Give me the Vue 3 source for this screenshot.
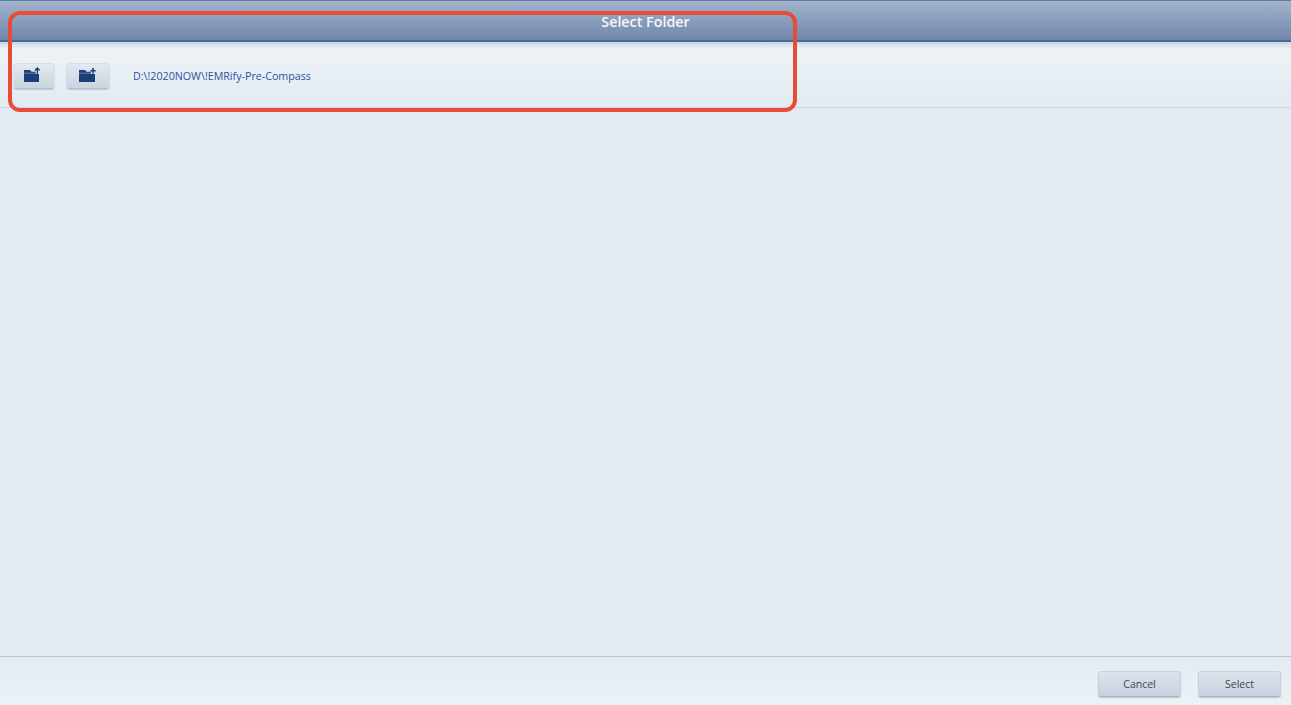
<script setup>
const path = 'D:\\!2020NOW\\!EMRify-Pre-Compass'
</script>

<template>
  <div class="dialog">
    <header class="title-bar">
      <h1 class="title">Select Folder</h1>
    </header>
    <section class="toolbar">
      <button class="icon-btn first" aria-label="Parent folder">
        <svg width="18" height="15" viewBox="0 0 18 15">
          <path d="M1 3h6l1.6 1.8h3.9V7H16v8H1z" fill="#1c3f78" />
          <path d="M1 6.2h11" stroke="#8ea3c0" stroke-width=".7" />
          <path d="M14.3 6.8V1.6M12 3.4l2.3-2.4 2.3 2.4" fill="none" stroke="#1c3f78" stroke-width="1.4" />
        </svg>
      </button>
      <button class="icon-btn second" aria-label="New folder">
        <svg width="18" height="15" viewBox="0 0 18 15">
          <path d="M1 3h6l1.6 1.8h4.2V7H17v8H1z" fill="#1c3f78" />
          <path d="M1 6.2h12" stroke="#8ea3c0" stroke-width=".7" />
          <path d="M15 1v5.4M12.3 3.7h5.4" fill="none" stroke="#1c3f78" stroke-width="1.6" />
        </svg>
      </button>
      <span class="path">{{ path }}</span>
    </section>
    <main class="content"></main>
    <footer class="footer">
      <button class="action">Cancel</button>
      <button class="action">Select</button>
    </footer>
    <div class="callout"></div>
  </div>
</template>

<style scoped>
.dialog {
  position: relative;
  display: flex;
  flex-direction: column;
  width: 1291px;
  height: 705px;
  overflow: hidden;
  background: #e3ebf2;
  font-family: "Open Sans", "Noto Sans", sans-serif;
}
.title-bar {
  flex: 0 0 42px;
  box-sizing: border-box;
  border-top: 1px solid #5f7fa8;
  border-bottom: 2px solid #48699a;
  background: linear-gradient(#a3b4cc, #7087aa);
  text-align: center;
}
.title {
  margin: 0;
  font-size: 14.3px;
  font-weight: 600;
  line-height: 39px;
  height: 39px;
  color: #f4f7fb;
  padding-top: 1px;
  box-sizing: border-box;
}
.toolbar {
  flex: 0 0 66px;
  box-sizing: border-box;
  display: flex;
  align-items: center;
  padding: 3px 0 0 13px;
  border-bottom: 1px solid #cfd8e0;
  background: linear-gradient(#cdd7e0 0, #edf3f7 7px, #e2ebf1 100%);
}
.icon-btn {
  display: flex;
  align-items: center;
  justify-content: center;
  box-sizing: border-box;
  width: 42px;
  height: 26px;
  padding: 0;
  border: 1px solid #d6dfe8;
  border-bottom-color: #b3bfcc;
  border-radius: 4px;
  background: linear-gradient(#e2e9f0, #c9d5e0);
  box-shadow: 0 1px 1px #bcc8d4;
}
.icon-btn svg {
  margin-bottom: 3px;
}
.icon-btn.first svg {
  margin-right: 4px;
}
.icon-btn.second {
  width: 44px;
  margin-left: 11px;
}
.icon-btn.second svg {
  margin-right: 2px;
}
.path {
  margin-left: 23px;
  font-size: 10.7px;
  color: #2b50a0;
}
.content {
  flex: 1;
}
.footer {
  flex: 0 0 49px;
  box-sizing: border-box;
  display: flex;
  justify-content: flex-end;
  gap: 17px;
  padding: 14px 10px 0 0;
  border-top: 1px solid #b9c3cd;
  background: linear-gradient(#e3ebf2, #ebf2f6);
}
.action {
  box-sizing: border-box;
  width: 83px;
  height: 26px;
  padding: 0;
  border: 1px solid #c6d1db;
  border-bottom-color: #a9b6c3;
  border-radius: 3px;
  background: linear-gradient(#dce4ec, #c6d2de);
  box-shadow: 0 1px 1px #b8c4d0;
  font: 10.5px "Open Sans", "Noto Sans", sans-serif;
  color: #3c4650;
}
.callout {
  position: absolute;
  left: 8px;
  top: 11px;
  width: 789px;
  height: 101px;
  box-sizing: border-box;
  border: 4px solid #e64c38;
  border-radius: 12px;
  pointer-events: none;
}
</style>
